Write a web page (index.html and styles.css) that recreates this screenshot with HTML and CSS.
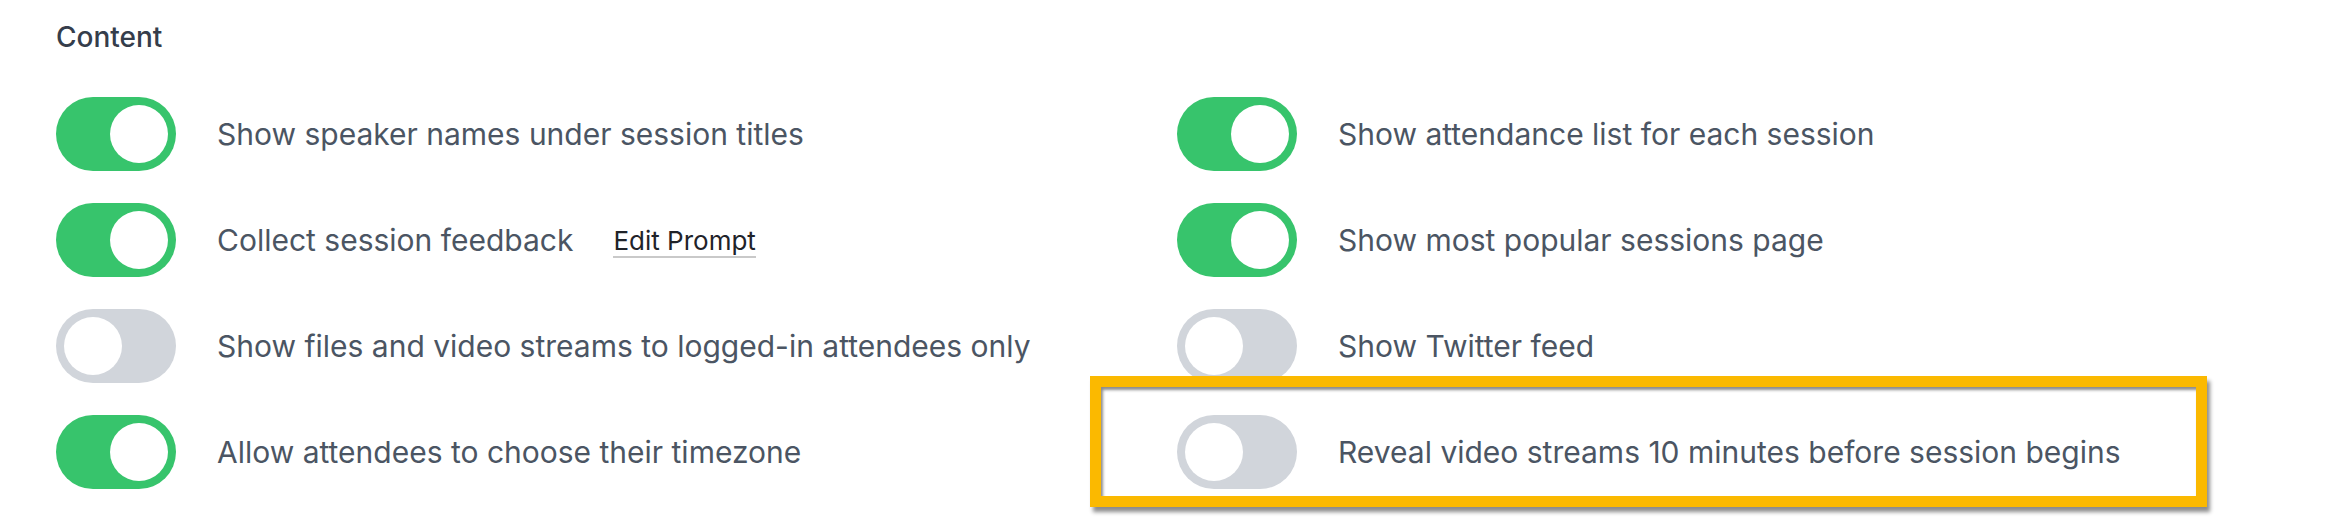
FILE: index.html
```html
<!DOCTYPE html>
<html lang="en">
<head>
    <meta charset="UTF-8">
    <meta name="viewport" content="width=device-width, initial-scale=1.0">
    <title>Content Settings</title>
    <link rel="stylesheet" href="styles.css">
</head>
<body>
    <div class="section">
        <h2 class="section-title">Content</h2>
        <div class="settings">
            <div class="setting">
                <span class="toggle on"><span class="knob"></span></span>
                <span class="label">Show speaker names under session titles</span>
            </div>
            <div class="setting">
                <span class="toggle on"><span class="knob"></span></span>
                <span class="label">Show attendance list for each session</span>
            </div>
            <div class="setting">
                <span class="toggle on"><span class="knob"></span></span>
                <span class="label">Collect session feedback</span>
                <a class="edit-link" href="#">Edit Prompt</a>
            </div>
            <div class="setting">
                <span class="toggle on"><span class="knob"></span></span>
                <span class="label">Show most popular sessions page</span>
            </div>
            <div class="setting">
                <span class="toggle"><span class="knob"></span></span>
                <span class="label">Show files and video streams to logged-in attendees only</span>
            </div>
            <div class="setting">
                <span class="toggle"><span class="knob"></span></span>
                <span class="label">Show Twitter feed</span>
            </div>
            <div class="setting">
                <span class="toggle on"><span class="knob"></span></span>
                <span class="label">Allow attendees to choose their timezone</span>
            </div>
            <div class="setting highlighted">
                <span class="toggle"><span class="knob"></span></span>
                <span class="label">Reveal video streams 10 minutes before session begins</span>
                <span class="highlight-box"></span>
            </div>
        </div>
    </div>
</body>
</html>
```

FILE: styles.css
```css
html, body {
    min-height: 100vh;
}

body {
    margin: 0;
    padding: 0;
    background: #fff;
    font-family: Inter, "Noto Sans", sans-serif;
}

.section {
    padding: 19px 0 33px 56px;
}

.section-title {
    margin: 0;
    font-size: 28px;
    line-height: 36px;
    font-weight: 500;
    color: #353d4b;
}

.settings {
    display: grid;
    grid-template-columns: 1121px 1121px;
    row-gap: 32px;
    margin-top: 42px;
}

.setting {
    display: flex;
    align-items: center;
    height: 74px;
    position: relative;
}

.toggle {
    flex: none;
    width: 120px;
    height: 74px;
    border-radius: 37px;
    background-color: #d1d5db;
    position: relative;
    margin-right: 41px;
}

.toggle .knob {
    position: absolute;
    top: 8px;
    left: 8px;
    width: 58px;
    height: 58px;
    border-radius: 50%;
    background-color: #fff;
}

.toggle.on {
    background-color: #37c46c;
}

.toggle.on .knob {
    left: 54px;
}

.label {
    font-size: 30px;
    color: #4b5563;
    white-space: nowrap;
}

.edit-link {
    margin-left: 40px;
    font-size: 26px;
    line-height: 30px;
    color: #1f2329;
    text-decoration: none;
    border-bottom: 2px solid #c9c9c9;
    padding-bottom: 0;
    margin-top: 4px;
}

.highlight-box {
    position: absolute;
    left: -87px;
    top: -39px;
    width: 1117px;
    height: 131px;
    box-sizing: border-box;
    border: 11px solid #fbb900;
    box-shadow: 3px 5px 4px rgba(0, 0, 0, 0.45), inset 2px 3px 3px rgba(0, 0, 0, 0.45);
    pointer-events: none;
}
```
